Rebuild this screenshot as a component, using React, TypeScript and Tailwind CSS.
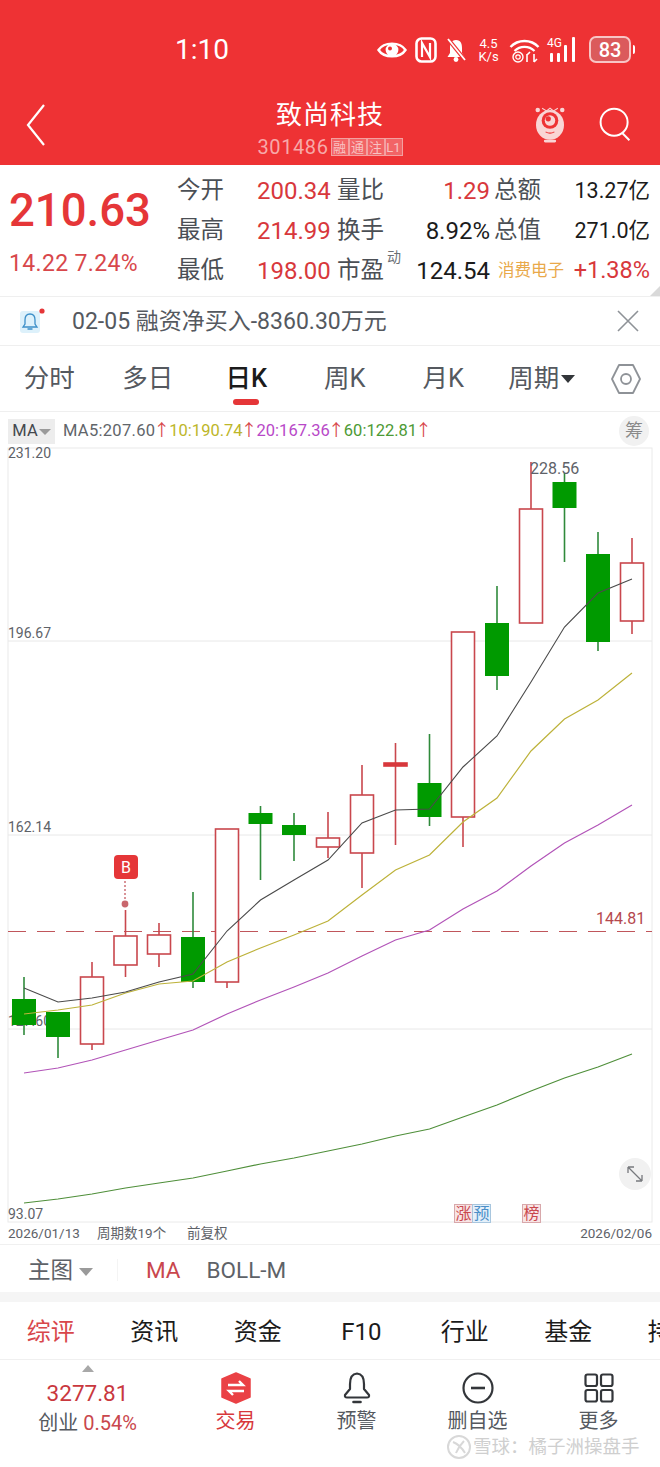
import React from 'react'

type Candle = { x: number; hi: number; lo: number; top: number; bottom: number; up: boolean }

const candles: Candle[] = [
    { x: 24, hi: 977, lo: 1035, top: 999, bottom: 1025, up: false },
    { x: 58, hi: 1012, lo: 1058, top: 1012, bottom: 1037, up: false },
    { x: 92, hi: 962, lo: 1050, top: 977, bottom: 1044, up: true },
    { x: 125.5, hi: 910, lo: 977, top: 936, bottom: 965, up: true },
    { x: 159, hi: 923, lo: 967, top: 935, bottom: 954, up: true },
    { x: 193, hi: 892, lo: 988, top: 937, bottom: 982, up: false },
    { x: 227, hi: 829, lo: 988, top: 829, bottom: 982, up: true },
    { x: 260.5, hi: 806, lo: 880, top: 813, bottom: 824, up: false },
    { x: 294, hi: 813, lo: 861, top: 825, bottom: 835, up: false },
    { x: 328, hi: 812, lo: 858, top: 838, bottom: 847, up: true },
    { x: 362, hi: 765, lo: 888, top: 795, bottom: 853, up: true },
    { x: 395.5, hi: 743, lo: 845, top: 763, bottom: 766, up: true },
    { x: 429.5, hi: 734, lo: 826, top: 783, bottom: 817, up: false },
    { x: 463, hi: 632, lo: 847, top: 632, bottom: 817, up: true },
    { x: 497, hi: 586, lo: 690, top: 623, bottom: 676, up: false },
    { x: 531, hi: 462, lo: 623, top: 509, bottom: 623, up: true },
    { x: 564.5, hi: 473, lo: 562, top: 482, bottom: 508, up: false },
    { x: 598, hi: 532, lo: 651, top: 554, bottom: 642, up: false },
    { x: 632, hi: 538, lo: 634, top: 563, bottom: 621, up: true },
]

const xs = candles.map(c => c.x)
const toPoints = (ys: number[]) => ys.map((y, i) => `${xs[i]},${y}`).join(' ')

const ma5 = [988, 1002, 998, 992, 982, 974, 931, 900, 880, 860, 823, 810, 809, 767, 736, 682, 627, 593, 579]
const ma10 = [1014, 1010, 1005, 993, 984, 981, 962, 948, 935, 921, 895, 870, 855, 822, 798, 751, 719, 700, 673]
const ma20 = [1073, 1068, 1060, 1050, 1040, 1030, 1014, 1000, 987, 973, 956, 940, 930, 909, 891, 866, 843, 825, 805]
const ma60 = [1203, 1199, 1194, 1188, 1183, 1178, 1171, 1164, 1158, 1151, 1144, 1136, 1129, 1117, 1105, 1091, 1078, 1067, 1054]

const StatusIcons = () => (
    <div className="flex items-center text-white">
        {/* eye */}
        <svg width="30" height="22" viewBox="0 0 30 22" className="mr-[8px]">
            <path d="M1.5 11 C7 2.5 23 2.5 28.5 11 C23 19.5 7 19.5 1.5 11 Z" fill="none" stroke="white" strokeWidth="2.4" />
            <circle cx="15" cy="11" r="6.4" fill="white" />
            <circle cx="13" cy="9.5" r="2" fill="#EE3234" />
        </svg>
        {/* nfc */}
        <svg width="22" height="26" viewBox="0 0 22 26" className="mr-[8px]">
            <rect x="1.5" y="1.5" width="19" height="23" rx="5" fill="none" stroke="white" strokeWidth="2.6" />
            <path d="M7 20 V6 L15 20 V6" fill="none" stroke="white" strokeWidth="2.2" />
        </svg>
        {/* muted bell */}
        <svg width="22" height="26" viewBox="0 0 22 26" className="mr-[10px]">
            <path d="M11 3 C6 3 5 7 5 11 V16 L2.5 20 H19.5 L17 16 V11 C17 7 16 3 11 3 Z" fill="white" />
            <circle cx="11" cy="22.5" r="2.4" fill="white" />
            <path d="M3 2 L20 23" stroke="#EE3234" strokeWidth="4" />
            <path d="M3 2 L20 23" stroke="white" strokeWidth="1.8" />
        </svg>
        <div className="mr-[9px] flex w-[23px] flex-col items-center text-[13px] leading-[13px]">
            <span>4.5</span>
            <span>K/s</span>
        </div>
        {/* wifi */}
        <svg width="31" height="26" viewBox="0 0 31 26" className="mr-[7px]">
            <path d="M1.5 10 C9 2 22 2 29.5 10" fill="none" stroke="white" strokeWidth="2.4" />
            <path d="M5.5 14 C11 8.5 20 8.5 25.5 14" fill="none" stroke="white" strokeWidth="2.2" />
            <circle cx="9" cy="20" r="5" fill="none" stroke="white" strokeWidth="1.4" />
            <circle cx="9" cy="20" r="2.2" fill="none" stroke="white" strokeWidth="1.2" />
            <path d="M18 25 V17 M21 15 L18 18 M25 25 V17 M28 22 L25 25" stroke="white" strokeWidth="1.6" fill="none" />
        </svg>
        {/* 4G signal */}
        <div className="relative mr-[9px] h-[28px] w-[33px]">
            <span className="absolute left-0 top-[0px] text-[12px] leading-[14px]">4G</span>
            <svg width="33" height="28" viewBox="0 0 33 28" className="absolute left-0 top-0">
                <rect x="3" y="17" width="3" height="9" rx="1" fill="white" />
                <rect x="10" y="17" width="3" height="9" rx="1" fill="white" />
                <rect x="17" y="9" width="3" height="17" rx="1" fill="white" />
                <rect x="25" y="1" width="3" height="25" rx="1" fill="white" />
            </svg>
        </div>
        {/* battery */}
        <div className="flex items-center">
            <div className="flex h-[27px] w-[42px] items-center justify-center rounded-[7px] border-2 border-[#F8C5C5] bg-[#DB5A5C] text-[20px] font-medium leading-none">
                83
            </div>
            <div className="ml-[2px] h-[9px] w-[2px] rounded-r bg-white" />
        </div>
    </div>
)

const Badge = ({ children }: { children: React.ReactNode }) => (
    <span className="flex h-[18px] w-[18px] items-center justify-center border border-[#F3A0A0] bg-[#F26466] text-[13px] leading-none text-[#F8C2C2]">
        {children}
    </span>
)

const Header = () => (
    <div className="h-[165px] bg-[#EE3234] text-white">
        <div className="flex h-[98px] items-center justify-between pl-[175px] pr-[25px] pt-[1px]">
            <div className="text-[28px] font-normal leading-none">1:10</div>
            <StatusIcons />
        </div>
        <div className="flex h-[67px] items-start justify-between">
            <div className="flex w-[170px] pl-[24px] pt-[5px]">
                <svg width="24" height="44" viewBox="0 0 24 44">
                    <path d="M20 2 L4 22 L20 42" fill="none" stroke="white" strokeWidth="2.2" />
                </svg>
            </div>
            <div className="flex flex-col items-center">
                <div className="mt-[1px] text-[26px] leading-[32px] tracking-[1px]">致尚科技</div>
                <div className="mt-[4px] flex items-center text-[#F7A9A9]">
                    <span className="mr-[2px] text-[20px] leading-[24px] tracking-[0.6px]">301486</span>
                    <Badge>融</Badge>
                    <Badge>通</Badge>
                    <Badge>注</Badge>
                    <Badge>L1</Badge>
                </div>
            </div>
            <div className="flex w-[170px] justify-end gap-[29px] pr-[27px] pt-[5px]">
                <svg width="36" height="42" viewBox="0 0 36 48">
                    <path d="M9 6 L14 9 L18 6 L22 9 L27 6" fill="none" stroke="#F9D5D5" strokeWidth="1.2" />
                    <circle cx="4" cy="8" r="2.6" fill="#F9D5D5" />
                    <circle cx="32" cy="8" r="2.6" fill="#F9D5D5" />
                    <ellipse cx="18" cy="25" rx="16" ry="17" fill="#F9D5D5" />
                    <circle cx="18" cy="20" r="9.5" fill="#EE3234" />
                    <circle cx="18" cy="20" r="6" fill="#F9D5D5" />
                    <circle cx="16" cy="18" r="3" fill="#EE3234" />
                    <path d="M13 33 Q18 36 23 33" fill="none" stroke="#EE3234" strokeWidth="1.3" />
                    <rect x="11" y="42" width="14" height="3" rx="1.5" fill="#F9D5D5" />
                </svg>
                <svg width="36" height="36" viewBox="0 0 36 40" className="mt-[3px]">
                    <circle cx="17" cy="18" r="15" fill="none" stroke="white" strokeWidth="2.2" />
                    <path d="M26 30 L34 38" stroke="white" strokeWidth="2.2" />
                </svg>
            </div>
        </div>
    </div>
)

const Label = ({ children }: { children: React.ReactNode }) => (
    <div className="text-[23.5px] text-[#4B4F55]">{children}</div>
)

const Quote = () => (
    <div className="relative flex h-[132px] border-b border-[#EFEFEF]">
        <div className="w-[177px] pl-[9px]">
            <div className="mt-[18px] text-[45.5px] font-medium leading-[56px] text-[#E53638]">210.63</div>
            <div className="mt-[11px] text-[23px] leading-[28px] tracking-[0.35px] text-[#D8474B]">14.22 7.24%</div>
        </div>
        <div className="mt-[6px] grid h-[120px] w-[473px] grid-cols-[80px_80px_66px_87px_160px] grid-rows-3 items-center whitespace-nowrap text-[24px] leading-none">
            <Label>今开</Label>
            <div className="text-[#D8383C]">200.34</div>
            <Label>量比</Label>
            <div className="text-right text-[#D8383C]">1.29</div>
            <div className="flex items-center justify-between pl-[4px]">
                <Label>总额</Label>
                <span className="text-[21.5px] text-[#1B1B1B]">13.27亿</span>
            </div>
            <Label>最高</Label>
            <div className="text-[#D8383C]">214.99</div>
            <Label>换手</Label>
            <div className="text-right text-[#1B1B1B]">8.92%</div>
            <div className="flex items-center justify-between pl-[4px]">
                <Label>总值</Label>
                <span className="text-[21.5px] text-[#1B1B1B]">271.0亿</span>
            </div>
            <Label>最低</Label>
            <div className="text-[#D8383C]">198.00</div>
            <div className="relative">
                <Label>市盈</Label>
                <span className="absolute left-[50px] top-[-9px] text-[14px] text-[#6B6F75]">动</span>
            </div>
            <div className="text-right text-[#1B1B1B]">124.54</div>
            <div className="flex items-center justify-between pl-[8px]">
                <span className="text-[16.5px] text-[#E9A94A]">消费电子</span>
                <span className="text-[23.5px] text-[#D8383C]">+1.38%</span>
            </div>
        </div>
        <div className="absolute bottom-0 right-0 h-0 w-0 border-b-[10px] border-l-[10px] border-b-[#D9D9D9] border-l-transparent" />
    </div>
)

const Notice = () => (
    <div className="flex h-[49px] items-center justify-between border-b border-[#EFEFEF] pl-[19px] pr-[20px]">
        <div className="flex items-center">
            <svg width="26" height="26" viewBox="0 0 26 26">
                <rect x="1" y="3" width="20" height="22" rx="3" fill="#DDF1FB" />
                <path d="M11 6 C7 6 6 9 6 12 V16 L4 19 H18 L16 16 V12 C16 9 15 6 11 6 Z M8.5 21 H13.5" fill="none" stroke="#3C8FC8" strokeWidth="1.3" />
                <circle cx="23" cy="3" r="2.6" fill="#E53638" />
            </svg>
            <span className="ml-[27px] text-[23px] leading-none text-[#55595F]">02-05 融资净买入-8360.30万元</span>
        </div>
        <svg width="24" height="24" viewBox="0 0 24 24">
            <path d="M2 2 L22 22 M22 2 L2 22" stroke="#8E9297" strokeWidth="1.6" />
        </svg>
    </div>
)

const KTabs = () => (
    <div className="grid h-[66px] grid-cols-[repeat(6,98.5px)_1fr] items-center border-b border-[#EFEFEF] text-[25.5px] leading-none text-[#55595F]">
        <div className="text-center">分时</div>
        <div className="text-center">多日</div>
        <div className="relative text-center font-medium text-[#1B1B1B]">
            日K
            <div className="absolute left-[36px] top-[33px] h-[6px] w-[26px] rounded-full bg-[#E53638]" />
        </div>
        <div className="text-center">周K</div>
        <div className="text-center">月K</div>
        <div className="flex items-center justify-center">
            周期
            <span className="ml-[2px] h-0 w-0 border-x-[7px] border-t-[8px] border-x-transparent border-t-[#33363A]" />
        </div>
        <div className="flex justify-center pl-[1px]">
            <svg width="30" height="34" viewBox="0 0 30 34">
                <path d="M8 3 H22 L29 17 L22 31 H8 L1 17 Z" fill="none" stroke="#8E9297" strokeWidth="1.8" strokeLinejoin="round" />
                <circle cx="15" cy="17" r="5" fill="none" stroke="#8E9297" strokeWidth="1.8" />
            </svg>
        </div>
    </div>
)

const UpArrow = () => <span className="mr-[1px] flex w-[13px] justify-center text-[#D8474B]">↑</span>

const Legend = () => (
    <div className="flex h-[33px] items-center whitespace-nowrap pl-[8px] pr-[11px] pt-[5px] text-[16.5px] leading-none">
        <div className="flex h-[25px] w-[47px] items-center justify-center bg-[#EDEDED] text-[#44484D]">
            MA
            <span className="ml-[1px] mt-[2px] h-0 w-0 border-x-[6px] border-t-[6px] border-x-transparent border-t-[#9A9A9A]" />
        </div>
        <div className="ml-[8px] flex">
            <span className="tracking-[0.3px] text-[#61656A]">MA5:207.60</span>
            <UpArrow />
            <span className="text-[#BDB62A]">10:190.74</span>
            <UpArrow />
            <span className="text-[#B848C8]">20:167.36</span>
            <UpArrow />
            <span className="text-[#4D9A35]">60:122.81</span>
            <UpArrow />
        </div>
        <div className="ml-auto flex h-[30px] w-[30px] items-center justify-center rounded-full bg-[#F1F1F1] text-[18px] text-[#8A8A8A]">
            筹
        </div>
    </div>
)

const CandleMark = ({ c }: { c: Candle }) => {
    const color = c.up ? '#C9474D' : '#009A00'
    const wick = c.up ? '#C9474D' : '#2F8A3B'
    const thin = c.bottom - c.top < 5
    return (
        <g>
            <line x1={c.x} x2={c.x} y1={c.hi} y2={c.lo} stroke={wick} strokeWidth="1.6" />
            {c.up ? (
                <rect x={c.x - 11.5} y={c.top} width="23" height={c.bottom - c.top} fill={thin ? '#D8383C' : 'white'} stroke={thin ? '#D8383C' : color} strokeWidth="1.6" />
            ) : (
                <rect x={c.x - 12} y={c.top} width="24" height={c.bottom - c.top} fill={color} />
            )}
        </g>
    )
}

const Chart = () => (
    <svg viewBox="0 445 660 778" width="660" height="778" className="block">
        <rect x="8" y="448" width="644" height="774" fill="none" stroke="#EAEAEA" strokeWidth="1" />
        <line x1="8" x2="652" y1="641" y2="641" stroke="#E8E8E8" />
        <line x1="8" x2="652" y1="835" y2="835" stroke="#E8E8E8" />
        <line x1="8" x2="652" y1="1029" y2="1029" stroke="#E8E8E8" />

        <g fill="#5E6268" fontSize="14">
            <text x="8" y="458">231.20</text>
            <text x="8" y="638">196.67</text>
            <text x="8" y="832">162.14</text>
            <text x="8" y="1026">127.60</text>
            <text x="8" y="1219">93.07</text>
        </g>

        <line x1="8" x2="652" y1="931.5" y2="931.5" stroke="#C0565B" strokeWidth="1" strokeDasharray="18 11" />
        <text x="596" y="924" fill="#B5484D" fontSize="16">144.81</text>

        {candles.map((c, i) => (
            <CandleMark key={i} c={c} />
        ))}

        <polyline points={toPoints(ma60)} fill="none" stroke="#4F8F3A" strokeWidth="1.2" />
        <polyline points={toPoints(ma20)} fill="none" stroke="#B254B8" strokeWidth="1.2" />
        <polyline points={toPoints(ma10)} fill="none" stroke="#BDB23A" strokeWidth="1.2" />
        <polyline points={toPoints(ma5)} fill="none" stroke="#4A4A4A" strokeWidth="1.1" />

        <text x="530" y="474" fill="#5E6268" fontSize="16">228.56</text>

        {/* buy marker */}
        <rect x="114" y="855" width="24" height="24" rx="4" fill="#E53638" />
        <text x="126" y="873" fill="white" fontSize="16" textAnchor="middle">B</text>
        <line x1="125" x2="125" y1="881" y2="900" stroke="#C9676D" strokeWidth="1.4" strokeDasharray="2 2" />
        <circle cx="125" cy="904" r="3.4" fill="#C9676D" />

        {/* resize button */}
        <circle cx="635" cy="1174" r="16" fill="#F1F1F1" />
        <path d="M628 1167 L642 1181 M628 1167 H634 M628 1167 V1173 M642 1181 H636 M642 1181 V1175" fill="none" stroke="#77797D" strokeWidth="1.3" />

        {/* limit-up tags */}
        <rect x="454.5" y="1204.5" width="18" height="18" fill="#F8E4E5" stroke="#D8A8AB" />
        <text x="463.5" y="1219" fill="#C9474D" fontSize="16" textAnchor="middle">涨</text>
        <rect x="472.5" y="1204.5" width="18" height="18" fill="#E4F0FA" stroke="#A8C6DE" />
        <text x="481.5" y="1219" fill="#4C8FC8" fontSize="16" textAnchor="middle">预</text>
        <rect x="522.5" y="1204.5" width="18" height="18" fill="#F8E4E5" stroke="#D8A8AB" />
        <text x="531.5" y="1219" fill="#C9474D" fontSize="16" textAnchor="middle">榜</text>
    </svg>
)

const DateRow = () => (
    <div className="flex h-[22px] items-center border-b border-[#F0F0F0] px-[8px] text-[13.5px] leading-none text-[#5E6268]">
        <span className="w-[89px]">2026/01/13</span>
        <span className="w-[90px]">周期数19个</span>
        <span>前复权</span>
        <span className="ml-auto">2026/02/06</span>
    </div>
)

const MainPick = () => (
    <div className="flex h-[47px] items-center pt-[3px] text-[22.5px] leading-none text-[#5E6268]">
        <div className="flex w-[118px] items-center border-r border-[#F4F4F4] pl-[28px]">
            主图
            <span className="ml-[6px] mt-[3px] h-0 w-0 border-x-[7px] border-t-[8px] border-x-transparent border-t-[#9A9A9A]" />
        </div>
        <span className="ml-[28px] text-[#C9474D]">MA</span>
        <span className="ml-[26px]">BOLL-M</span>
    </div>
)

const subTabs = ['资讯', '资金', 'F10', '行业', '基金', '持股']

const SubTabs = () => (
    <div className="flex h-[58px] items-center overflow-hidden border-b border-[#F0F0F0] pt-[3px] text-[24px] leading-none text-[#1B1B1B]">
        <div className="-ml-[1px] w-[103.5px] shrink-0 text-center text-[#D8474B]">综评</div>
        {subTabs.map(t => (
            <div key={t} className="w-[103.5px] shrink-0 text-center">{t}</div>
        ))}
    </div>
)

const BottomItem = ({ label, children, active }: { label: string; children: React.ReactNode; active?: boolean }) => (
    <div className="flex w-[121px] flex-col items-center pt-[12px]">
        <div className="flex h-[32px] items-center justify-center">{children}</div>
        <div className={`mt-[3px] text-[20px] leading-[28px] ${active ? 'text-[#D8383C]' : 'text-[#55595F]'}`}>{label}</div>
    </div>
)

const BottomBar = () => (
    <div className="relative flex h-[107px] bg-white">
        <div className="flex w-[175px] flex-col items-center pt-[5px]">
            <span className="h-0 w-0 border-x-[6px] border-b-[7px] border-x-transparent border-b-[#A8A8A8]" />
            <div className="mt-[6px] text-[22.5px] leading-[30px] text-[#C9383E]">3277.81</div>
            <div className="text-[20px] leading-[30px] text-[#55595F]">
                创业 <span className="text-[#C9474D]">0.54%</span>
            </div>
        </div>
        <div className="flex">
            <BottomItem label="交易" active>
                <svg width="30" height="32" viewBox="0 0 30 32">
                    <path d="M15 1 L29 7 V25 L15 31 L1 25 V7 Z" fill="#EA4145" stroke="#EA4145" strokeWidth="1.5" strokeLinejoin="round" />
                    <path d="M7 13 H22 L18 9 M23 19 H8 L12 23" fill="none" stroke="white" strokeWidth="2.4" />
                </svg>
            </BottomItem>
            <BottomItem label="预警">
                <svg width="28" height="32" viewBox="0 0 28 32">
                    <path d="M14 1.5 C8 2 7 7 7 12 V17 L2 23 Q1.5 25.5 4 25.5 H24 Q26.5 25.5 26 23 L21 17 V12 C21 7 20 2 14 1.5 Z" fill="none" stroke="#33363A" strokeWidth="2.2" strokeLinejoin="round" />
                    <path d="M10.5 30 H17.5" stroke="#33363A" strokeWidth="2.6" strokeLinecap="round" />
                </svg>
            </BottomItem>
            <BottomItem label="删自选">
                <svg width="32" height="32" viewBox="0 0 32 32">
                    <circle cx="16" cy="16" r="14.5" fill="none" stroke="#33363A" strokeWidth="2.2" />
                    <path d="M9 16 H23" stroke="#33363A" strokeWidth="2.6" />
                </svg>
            </BottomItem>
            <BottomItem label="更多">
                <svg width="30" height="30" viewBox="0 0 30 30">
                    <rect x="1.5" y="1.5" width="11.5" height="11.5" rx="2" fill="none" stroke="#33363A" strokeWidth="2.2" />
                    <rect x="17" y="1.5" width="11.5" height="11.5" rx="2" fill="none" stroke="#33363A" strokeWidth="2.2" />
                    <rect x="1.5" y="17" width="11.5" height="11.5" rx="2" fill="none" stroke="#33363A" strokeWidth="2.2" />
                    <rect x="17" y="17" width="11.5" height="11.5" rx="2" fill="none" stroke="#33363A" strokeWidth="2.2" />
                </svg>
            </BottomItem>
        </div>
        {/* watermark */}
        <div className="absolute left-[446px] top-[74px] flex items-center text-[18.5px] leading-none text-[#CFCFCF]">
            <svg width="26" height="26" viewBox="0 0 26 26" className="mr-[1px]">
                <circle cx="13" cy="13" r="11" fill="none" stroke="#D8D8D8" strokeWidth="2" />
                <path d="M7 8 C12 10 16 14 19 19 M18 7 C15 10 12 14 10 19" fill="none" stroke="#D8D8D8" strokeWidth="2" />
            </svg>
            <span>雪球：橘子洲操盘手</span>
        </div>
    </div>
)

export default function App() {
    return (
        <div className="h-[1467px] w-[660px] overflow-hidden bg-white font-['Roboto','Noto_Sans_CJK_SC',sans-serif]">
            <Header />
            <Quote />
            <Notice />
            <KTabs />
            <Legend />
            <Chart />
            <DateRow />
            <MainPick />
            <div className="h-[10px] bg-[#F5F5F5]" />
            <SubTabs />
            <BottomBar />
        </div>
    )
}
